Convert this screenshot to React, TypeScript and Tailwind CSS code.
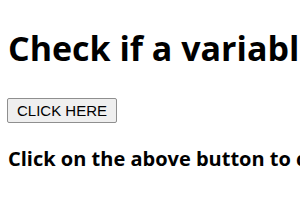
import React from 'react';

export default function App() {
  const [clicked, setClicked] = React.useState(false);

  return (
    <div className="w-[300px] h-[210px] overflow-hidden bg-white p-2 font-['Open_Sans',sans-serif] text-black">
      <h1 className="mt-[18px] whitespace-nowrap text-[34px] font-bold leading-[44px]">
        Check if a variable is a string in JavaScript
      </h1>
      <button
        onClick={() => setClicked(true)}
        className="mt-[28px] block h-[25px] w-[110px] rounded-[2px] border border-[#8f8f8f] bg-[#efefef] font-['Liberation_Sans',Arial,sans-serif] text-[15px] leading-none text-black -ml-px"
      >
        CLICK HERE
      </button>
      <p className="mt-[23px] whitespace-nowrap text-[20px] font-bold leading-[26px]">
        {clicked ? 'The variable is a string' : 'Click on the above button to check the variable'}
      </p>
    </div>
  );
}
